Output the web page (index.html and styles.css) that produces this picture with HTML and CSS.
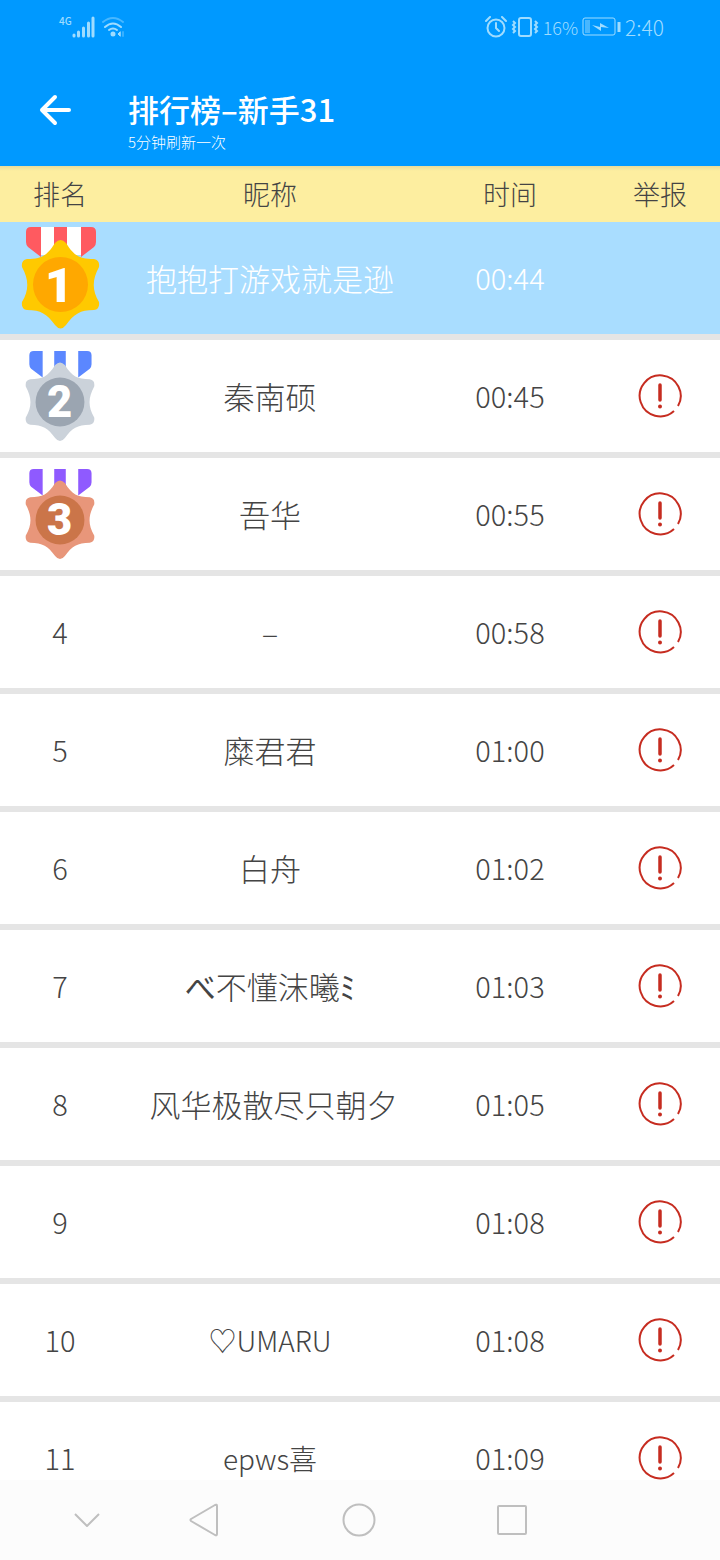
FILE: index.html
```html
<!DOCTYPE html>
<html lang="zh-CN">
<head>
  <meta charset="UTF-8" />
  <meta name="viewport" content="width=device-width, initial-scale=1.0"/>
  <title>排行榜</title>
  <link rel="stylesheet" href="styles.css">
</head>
<body>

  <div class="status-bar">
    <div class="status-left">
      <span class="network">4G</span>
      <svg width="23" height="22" viewBox="0 0 23 22" stroke="currentColor" stroke-width="3" stroke-linecap="round">
        <path d="M2 20v-1M6.500 20v-4M11.500 20v-8M16.500 20V7M21 20V2"/>
      </svg>
      <svg class="wifi" width="24" height="22" viewBox="0 0 24 22" fill="none" stroke="currentColor" stroke-width="2" stroke-linecap="round">
        <path d="M2 6Q12-2 22 6" opacity=".45"/>
        <path d="M4 11Q12 4 20 11M8 14Q12 11 16 14"/>
        <circle cx="12" cy="18" r="1.500" fill="currentColor"/>
        <path d="M19 16l-2 2 2 2z" fill="currentColor" stroke-width="1"/>
        <path d="M22 16v4" opacity=".35"/>
      </svg>
    </div>
    <div class="status-right">
      <svg width="22" height="22" viewBox="0 0 22 22" fill="none" stroke="currentColor" stroke-width="2" stroke-linecap="round">
        <circle cx="11" cy="12" r="8.500"/>
        <path d="M11 7v5l3 3M1 5l4-4M21 5l-4-4"/>
      </svg>
      <svg width="28" height="22" viewBox="0 0 28 22" fill="none" stroke="currentColor" stroke-width="2">
        <rect x="8" y="2" width="12" height="18" rx="2"/>
        <path d="M2 5l2 2-2 2 2 2-2 2 2 2-2 2M24 5l2 2-2 2 2 2-2 2 2 2-2 2"/>
      </svg>
      <span class="percent">16%</span>
      <svg class="battery" width="39" height="20" viewBox="0 0 39 20" fill="none" stroke="currentColor">
        <rect x="1" y="1" width="32" height="17" rx="2"/>
        <path d="M3 3h5v13H3z" fill="currentColor" stroke="none" opacity=".45"/>
        <path d="M10 8l8 2V6l9 5-8-1v4z" fill="currentColor" stroke="none"/>
        <path d="M37 5v10" stroke-width="3"/>
      </svg>
      <span>2:40</span>
    </div>
  </div>

  <header class="app-bar">
    <button class="back" aria-label="返回">
      <svg width="36" height="36" viewBox="0 0 36 36" fill="none" stroke="currentColor" stroke-width="4" stroke-linecap="round" stroke-linejoin="round">
        <path d="M17 5L4 18l13 13M4 18h27"/>
      </svg>
    </button>
    <div class="titles">
      <h1>排行榜–新手31</h1>
      <p class="subtitle">5分钟刷新一次</p>
    </div>
  </header>

  <main class="board">
    <table class="ranking">
      <thead>
        <tr>
          <th class="col-rank" scope="col">排名</th>
          <th class="col-name" scope="col">昵称</th>
          <th class="col-time" scope="col">时间</th>
          <th class="col-report" scope="col">举报</th>
        </tr>
      </thead>
      <tbody>
        <tr class="mine">
          <td><svg class="medal gold" viewBox="0 0 81 104"><use href="#medal"/><text x="39" y="76">1</text></svg></td>
          <td>抱抱打游戏就是逊</td>
          <td class="time">00:44</td>
          <td></td>
        </tr>
        <tr>
          <td><svg class="medal silver" viewBox="0 0 81 104"><use href="#medal"/><text x="40" y="75">2</text></svg></td>
          <td>秦南硕</td>
          <td class="time">00:45</td>
          <td><button class="report" aria-label="举报"><svg viewBox="0 0 46 46"><use href="#alert"/></svg></button></td>
        </tr>
        <tr>
          <td><svg class="medal bronze" viewBox="0 0 81 104"><use href="#medal"/><text x="40" y="75">3</text></svg></td>
          <td>吾华</td>
          <td class="time">00:55</td>
          <td><button class="report" aria-label="举报"><svg viewBox="0 0 46 46"><use href="#alert"/></svg></button></td>
        </tr>
        <tr>
          <td class="rank">4</td>
          <td>–</td>
          <td class="time">00:58</td>
          <td><button class="report" aria-label="举报"><svg viewBox="0 0 46 46"><use href="#alert"/></svg></button></td>
        </tr>
        <tr>
          <td class="rank">5</td>
          <td>糜君君</td>
          <td class="time">01:00</td>
          <td><button class="report" aria-label="举报"><svg viewBox="0 0 46 46"><use href="#alert"/></svg></button></td>
        </tr>
        <tr>
          <td class="rank">6</td>
          <td>白舟</td>
          <td class="time">01:02</td>
          <td><button class="report" aria-label="举报"><svg viewBox="0 0 46 46"><use href="#alert"/></svg></button></td>
        </tr>
        <tr>
          <td class="rank">7</td>
          <td><b>べ</b>不懂沫曦<b>ﾐ</b></td>
          <td class="time">01:03</td>
          <td><button class="report" aria-label="举报"><svg viewBox="0 0 46 46"><use href="#alert"/></svg></button></td>
        </tr>
        <tr>
          <td class="rank">8</td>
          <td>&nbsp;风华极散尽只朝夕</td>
          <td class="time">01:05</td>
          <td><button class="report" aria-label="举报"><svg viewBox="0 0 46 46"><use href="#alert"/></svg></button></td>
        </tr>
        <tr>
          <td class="rank">9</td>
          <td></td>
          <td class="time">01:08</td>
          <td><button class="report" aria-label="举报"><svg viewBox="0 0 46 46"><use href="#alert"/></svg></button></td>
        </tr>
        <tr>
          <td class="rank">10</td>
          <td class="latin">♡UMARU</td>
          <td class="time">01:08</td>
          <td><button class="report" aria-label="举报"><svg viewBox="0 0 46 46"><use href="#alert"/></svg></button></td>
        </tr>
        <tr>
          <td class="rank">11</td>
          <td class="latin">epws喜</td>
          <td class="time">01:09</td>
          <td><button class="report" aria-label="举报"><svg viewBox="0 0 46 46"><use href="#alert"/></svg></button></td>
        </tr>
      </tbody>
    </table>
  </main>

  <nav class="nav-bar">
    <button aria-label="收起">
      <svg width="36" height="36" viewBox="0 0 36 36"><path d="M6 12l12 12 12-12"/></svg>
    </button>
    <button aria-label="返回">
      <svg width="36" height="36" viewBox="0 0 36 36"><path d="M5 17L29 3Q31 2 31 4V32Q31 34 29 33L5 19Q4 18 5 17Z"/></svg>
    </button>
    <button aria-label="主屏幕">
      <svg width="36" height="36" viewBox="0 0 36 36"><circle cx="18" cy="18" r="15.500"/></svg>
    </button>
    <button aria-label="最近任务">
      <svg width="36" height="36" viewBox="0 0 36 36"><rect x="4" y="4" width="28" height="28" rx="1"/></svg>
    </button>
  </nav>

  <!-- shared shapes -->
  <svg class="sprite" aria-hidden="true">
    <symbol id="medal" viewBox="0 0 81 104">
      <path d="M21 1h40v28H21z" fill="#fff"/>
      <path class="ribbon" d="M11 1H21V31L8 21Q6 19 6 16V6Q6 1 11 1ZM34 1H47V30H34ZM61 1H71Q76 1 76 6V16Q76 19 74 21L61 31Z"/>
      <path class="star" d="M35 17Q40.500 11 46 17C54 30 60 33 74 33Q80 34 79 41C72 54 72 64 79 76Q80 83 74 84C60 84 54 88 46 99Q40.500 106 35 99C27 88 21 84 7 84Q1 83 2 76C9 64 9 54 2 41Q1 34 7 33C21 33 27 30 35 17Z"/>
      <circle class="disc" cx="40.500" cy="58.500" r="27.500"/>
    </symbol>
    <symbol id="alert" viewBox="0 0 46 46">
      <path d="M37 38A20.500 20.500 0 1 1 41 33" fill="none" stroke="#c62c20" stroke-width="2"/>
      <path d="M23 12V27" stroke="#c62c20" stroke-width="3.500" stroke-linecap="round"/>
      <circle cx="23" cy="33.500" r="2" fill="#c62c20"/>
    </symbol>
  </svg>

</body>
</html>
```
FILE: styles.css
```css
* {
  box-sizing: border-box;
}

body {
  margin: 0;
  height: 100vh;
  display: flex;
  flex-direction: column;
  overflow: hidden;
  background: #fff;
  color: #444;
  font-family: "Noto Sans CJK SC", sans-serif;
  font-weight: 300;
}

button {
  display: flex;
  align-items: center;
  justify-content: center;
  padding: 0;
  border: none;
  background: none;
  color: inherit;
  cursor: pointer;
}

.sprite {
  display: none;
}

/* status bar */
.status-bar {
  display: flex;
  justify-content: space-between;
  height: 54px;
  padding: 0 56px 0 59px;
  background: #0099ff;
  color: #9fdcff;
  flex-shrink: 0;
}

.status-left,
.status-right {
  display: flex;
  align-items: center;
}

.status-right {
  gap: 4px;
  font-size: 21px;
}

.percent {
  font-size: 18px;
}

.network {
  align-self: flex-start;
  margin-top: 14px;
  font-size: 10px;
  line-height: 14px;
  font-weight: 500;
}

.wifi {
  margin-left: 6px;
}

/* title bar */
.app-bar {
  display: flex;
  align-items: flex-start;
  height: 112px;
  padding: 0 38px;
  background: #0099ff;
  color: #fff;
  flex-shrink: 0;
}

.back {
  width: 36px;
  height: 112px;
}

.titles {
  margin-left: 54px;
  padding-top: 33px;
}

h1 {
  margin: 0;
  font-size: 31px;
  line-height: 44px;
  font-weight: 500;
}

.subtitle {
  margin: 0;
  font-size: 15px;
  line-height: 22px;
}

/* ranking list */
.board {
  flex: 1;
  min-height: 0;
  overflow: hidden;
}

.ranking {
  width: 100%;
  table-layout: fixed;
  border-collapse: separate;
  border-spacing: 0;
  text-align: center;
}

th {
  height: 56px;
  padding: 0;
  background: linear-gradient(#e9dc9c, #fdeea0 5px);
  font-size: 27px;
  line-height: 40px;
  font-weight: 300;
}

.col-rank,
.col-report {
  width: 16.6667%;
}

.col-time {
  width: 25%;
}

td {
  height: 118px;
  padding: 0;
  border-bottom: 6px solid #e5e5e5;
  font-size: 31px;
  line-height: 44px;
  white-space: nowrap;
}

.rank,
.time {
  padding-bottom: 2px;
  font-size: 29px;
}

.latin {
  font-size: 28px;
}

.mine td {
  background: #a9ddff;
  color: #fff;
}

.medal {
  display: block;
  width: 72px;
  margin: 0 auto;
}

.medal text {
  fill: #fff;
  font-family: Roboto, sans-serif;
  font-size: 49px;
  font-weight: 900;
  text-anchor: middle;
}

.gold {
  width: 81px;
  --ribbon: #ff5a60;
  --star: #ffc900;
  --disc: #ffa800;
}

.silver {
  --ribbon: #5b87ff;
  --star: #cbd2da;
  --disc: #9ba5b1;
}

.bronze {
  --ribbon: #8f5aff;
  --star: #e8967a;
  --disc: #cb7549;
}

.ribbon {
  fill: var(--ribbon);
}

.star {
  fill: var(--star);
}

.disc {
  fill: var(--disc);
}

.report {
  width: 46px;
  height: 46px;
  margin: 0 auto;
}

.report svg {
  width: 46px;
  height: 46px;
}

/* system navigation */
.nav-bar {
  display: grid;
  grid-template-columns: 29fr 29fr 48fr 28fr;
  height: 80px;
  padding: 0 21% 0 4%;
  background: #fcfcfc;
  color: #bfbfbf;
  flex-shrink: 0;
}

.nav-bar svg {
  fill: none;
  stroke: currentColor;
  stroke-width: 2;
  stroke-linejoin: round;
}
```
